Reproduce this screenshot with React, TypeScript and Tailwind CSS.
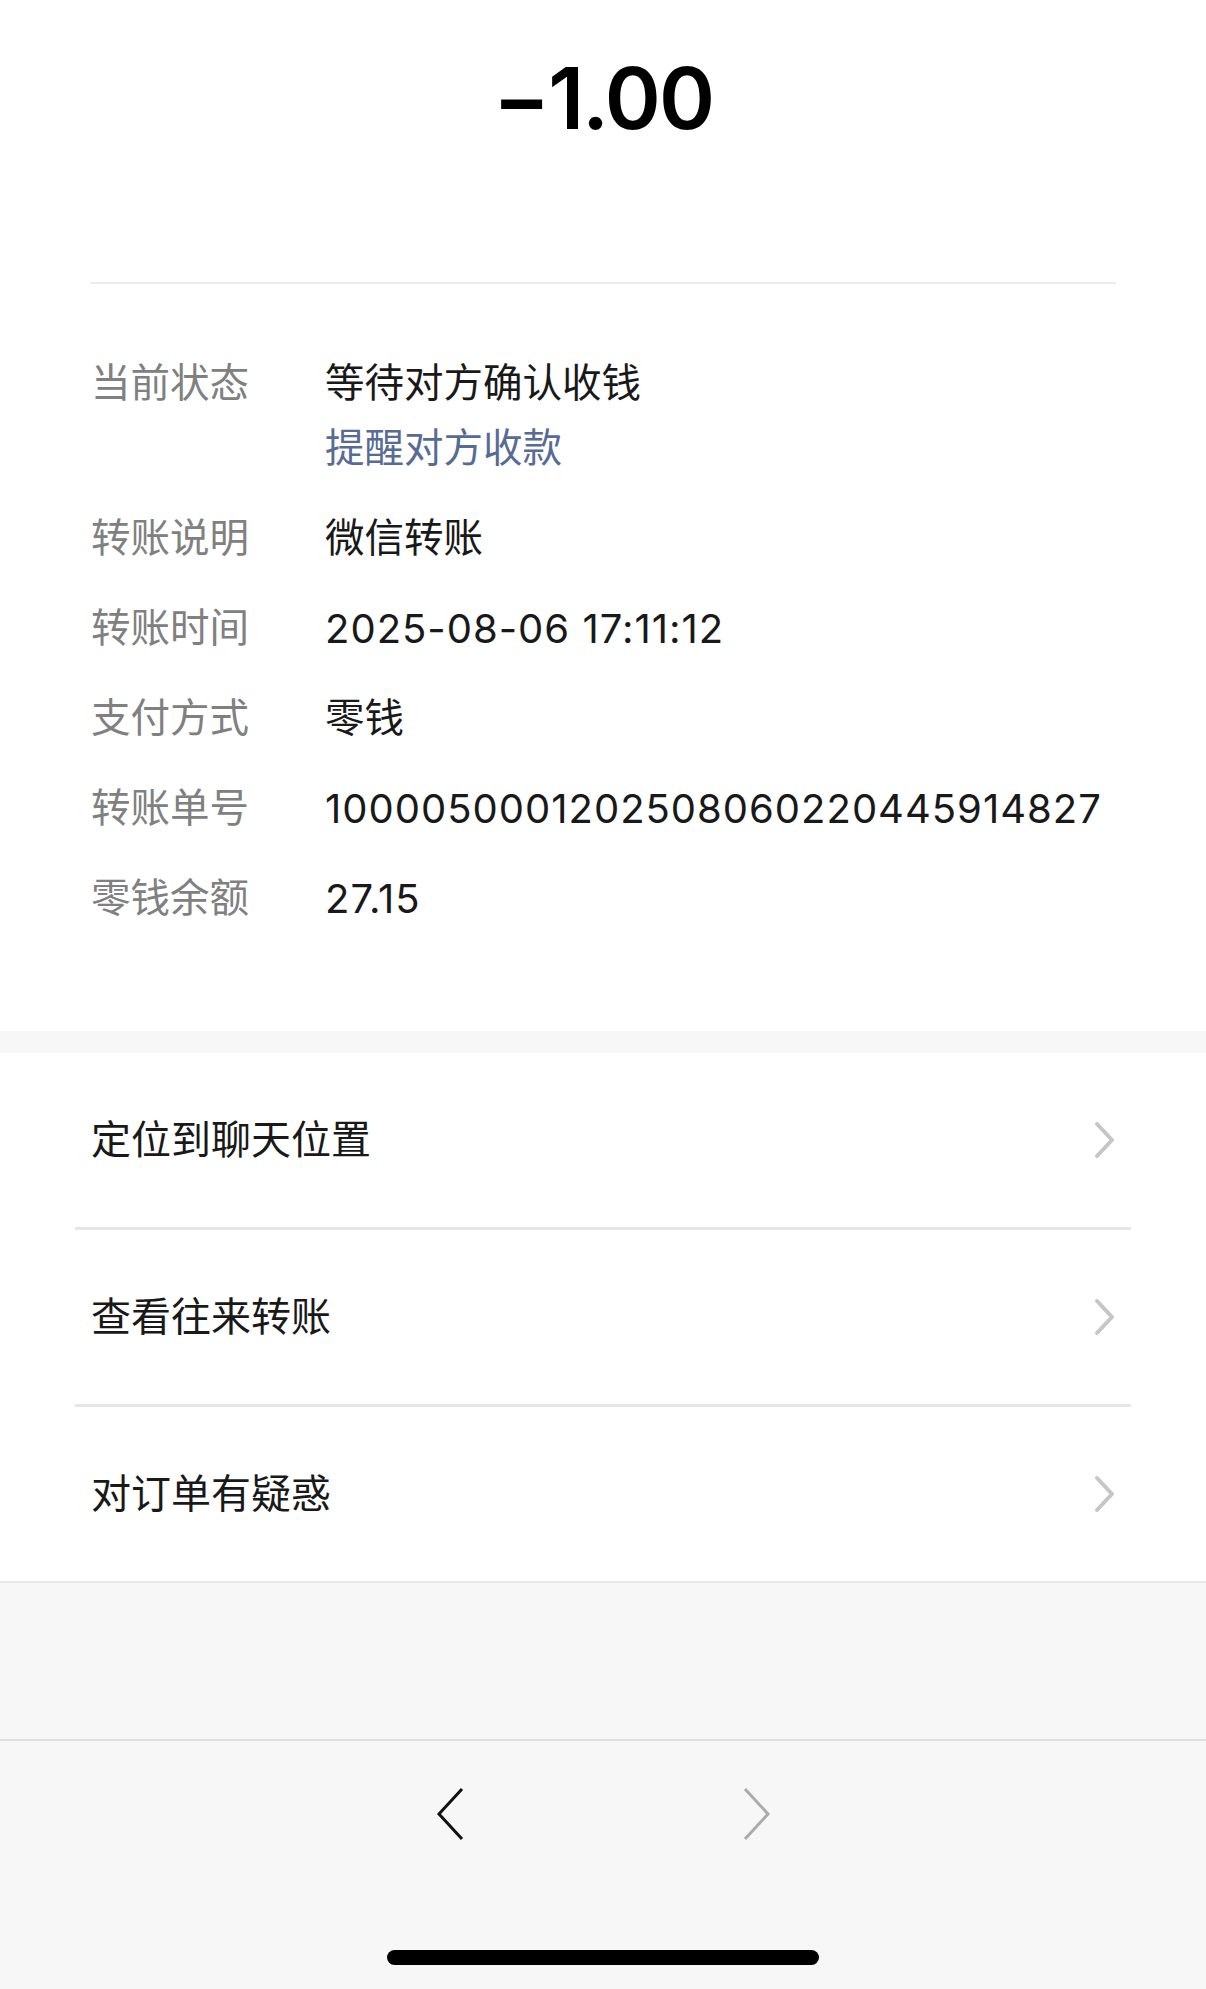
const FONT = {
  fontFamily: '"Inter", "Noto Sans CJK SC", "Noto Sans", sans-serif',
};

const DETAILS: { label: string; value: string; link?: string; num?: boolean }[] = [
  { label: "当前状态", value: "等待对方确认收钱", link: "提醒对方收款" },
  { label: "转账说明", value: "微信转账" },
  { label: "转账时间", value: "2025-08-06 17:11:12", num: true },
  { label: "支付方式", value: "零钱" },
  { label: "转账单号", value: "1000050001202508060220445914827", num: true },
  { label: "零钱余额", value: "27.15", num: true },
];

const ACTIONS = ["定位到聊天位置", "查看往来转账", "对订单有疑惑"];

const DetailRow = ({ label, value, link, num }: (typeof DETAILS)[number]) => (
  <div className="flex">
    <div className="w-[234px] shrink-0 h-[65px] flex items-center text-[39.5px] text-[#808080]">
      {label}
    </div>
    <div className="flex flex-col">
      <div
        className={
          num
            ? "h-[65px] flex items-center text-[40px] text-[#191919] tracking-[1px] whitespace-nowrap"
            : "h-[65px] flex items-center text-[39.5px] text-[#191919] whitespace-nowrap"
        }
      >
        {value}
      </div>
      {link && (
        <div className="h-[65px] flex items-center text-[39.5px] text-[#576b95]">
          {link}
        </div>
      )}
    </div>
  </div>
);

export default function App() {
  return (
    <div className="w-[1206px] h-[1989px] bg-[#f7f7f7] flex flex-col" style={FONT}>
      {/* amount + details */}
      <div className="bg-white">
        <div className="h-[282px] flex justify-center pt-[56px]">
          <span className="text-[85px] leading-none font-semibold text-black tracking-[-2px]">
            −1.00
          </span>
        </div>
        <div className="mx-[90px] h-[2px] bg-[#ececec]" />
        <div className="px-[91px] pt-[67px] pb-[100px] flex flex-col gap-[25px]">
          {DETAILS.map((d) => (
            <DetailRow key={d.label} {...d} />
          ))}
        </div>
      </div>

      <div className="h-[22px]" />

      {/* actions */}
      <div className="bg-white flex flex-col">
        {ACTIONS.map((a, i) => (
          <div key={a}>
            {i > 0 && <div className="mx-[75px] h-[3px] bg-[#e6e6e6]" />}
            <div className="h-[174px] flex items-center justify-between pl-[91px] pr-[89px]">
              <span className="text-[40px] text-[#191919]">{a}</span>
              <svg width="24" height="38" viewBox="0 0 24 38" fill="none">
                <path d="M4 3 L19 19 L4 35" stroke="#c6c6c6" strokeWidth="4" strokeLinecap="round" strokeLinejoin="round" />
              </svg>
            </div>
          </div>
        ))}
      </div>

      <div className="h-[158px] border-t-2 border-[#e8e8e8]" />

      {/* toolbar */}
      <div className="flex-1 border-t-2 border-[#dedede] flex flex-col items-center">
        <div className="flex items-center justify-center gap-[277px] mt-[46px]">
          <svg width="30" height="54" viewBox="0 0 30 54" fill="none">
            <path d="M27 2 L4 27 L27 52" stroke="#111" strokeWidth="3" strokeLinejoin="miter" />
          </svg>
          <svg width="30" height="54" viewBox="0 0 30 54" fill="none">
            <path d="M3 2 L26 27 L3 52" stroke="#ababab" strokeWidth="3" strokeLinejoin="miter" />
          </svg>
        </div>
        <div className="mt-auto mb-[24px] w-[432px] h-[15px] rounded-full bg-black" />
      </div>
    </div>
  );
}
